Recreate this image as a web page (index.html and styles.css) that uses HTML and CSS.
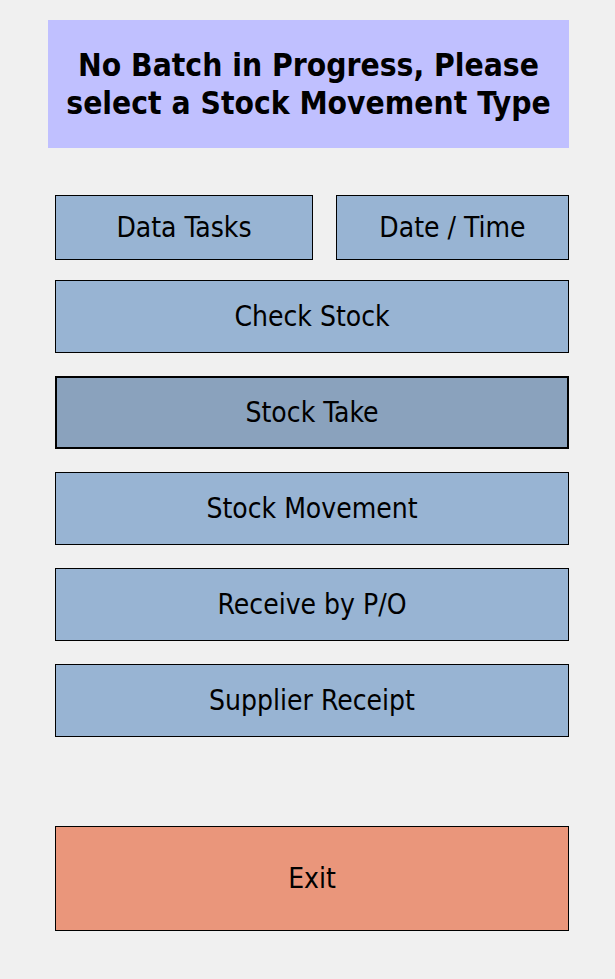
FILE: index.html
```html
<!DOCTYPE html>
<html>
<head>
<meta charset="utf-8">
<link rel="stylesheet" href="styles.css">
</head>
<body>
<div class="screen">
  <div class="banner">No Batch in Progress, Please<br>select a Stock Movement Type</div>
  <div class="menu">
    <div class="row">
      <div class="btn btn-data">Data Tasks</div>
      <div class="btn btn-date">Date / Time</div>
    </div>
    <div class="btn btn-wide">Check Stock</div>
    <div class="btn btn-wide btn-active">Stock Take</div>
    <div class="btn btn-wide">Stock Movement</div>
    <div class="btn btn-wide">Receive by P/O</div>
    <div class="btn btn-wide">Supplier Receipt</div>
    <div class="btn btn-exit">Exit</div>
  </div>
</div>
</body>
</html>
```
FILE: styles.css
```css
html, body {
  margin: 0;
  padding: 0;
  background: #f0f0f0;
}
.screen {
  width: 615px;
  height: 979px;
  box-sizing: border-box;
  padding-top: 20px;
  font-family: "DejaVu Sans Condensed", "DejaVu Sans", sans-serif;
  color: #000;
}
.banner {
  margin-left: 48px;
  width: 521px;
  height: 128px;
  background: #c0c0ff;
  display: flex;
  align-items: center;
  justify-content: center;
  text-align: center;
  font-weight: bold;
  font-size: 31.5px;
  line-height: 38px;
}
.menu {
  margin-left: 55px;
  width: 514px;
  margin-top: 47px;
  display: flex;
  flex-direction: column;
}
.row {
  display: flex;
  justify-content: space-between;
  margin-bottom: 20px;
}
.btn {
  box-sizing: border-box;
  background: #98b4d3;
  border: 1px solid #000;
  display: flex;
  align-items: center;
  justify-content: center;
  font-size: 28px;
}
.btn-data { width: 258px; height: 65px; }
.btn-date { width: 233px; height: 65px; }
.btn-wide { height: 73px; margin-bottom: 23px; }
.btn-active { background: #8aa2bd; border: 2px solid #000; }
.btn-exit { height: 105px; margin-top: 66px; background: #ea967b; }
```
